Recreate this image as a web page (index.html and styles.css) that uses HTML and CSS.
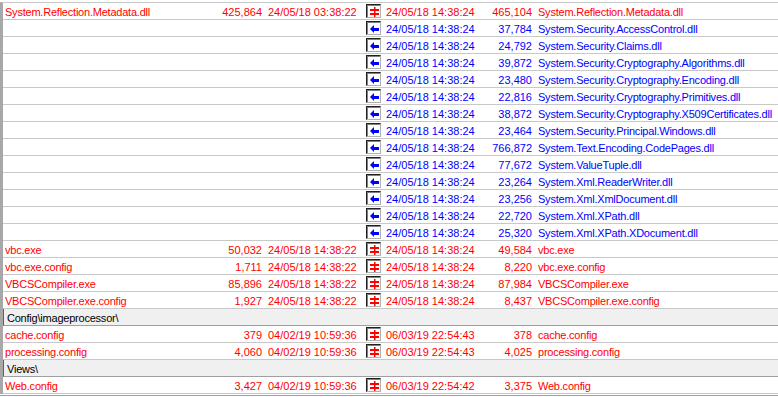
FILE: index.html
```html
<!DOCTYPE html>
<html>
<head>
<meta charset="utf-8">
<link rel="stylesheet" href="styles.css">
</head>
<body>
<svg width="0" height="0" class="defs">
  <defs>
    <g id="neq">
      <rect x="1" y="2" width="9" height="2" fill="#ff0000"/>
      <rect x="1" y="6" width="9" height="2" fill="#ff0000"/>
      <rect x="5" y="0" width="1.5" height="10" fill="#ff0000"/>
    </g>
    <g id="left">
      <polygon points="1,5 5,1 5,9" fill="#0000ff"/>
      <rect x="5" y="4" width="5" height="3" fill="#0000ff"/>
    </g>
  </defs>
</svg>
<div class="list">
  <div class="row red">
    <span class="name">System.Reflection.Metadata.dll</span><span class="size">425,864</span><span class="date">24/05/18 03:38:22</span>
    <span class="icon"><svg viewBox="0 0 11 10" width="11" height="10"><use href="#neq"/></svg></span>
    <span class="rdate">24/05/18 14:38:24</span><span class="size">465,104</span><span class="rname">System.Reflection.Metadata.dll</span>
  </div>
  <div class="row blue">
    <span class="name"></span><span class="size"></span><span class="date"></span>
    <span class="icon"><svg viewBox="0 0 11 10" width="11" height="10"><use href="#left"/></svg></span>
    <span class="rdate">24/05/18 14:38:24</span><span class="size">37,784</span><span class="rname">System.Security.AccessControl.dll</span>
  </div>
  <div class="row blue">
    <span class="name"></span><span class="size"></span><span class="date"></span>
    <span class="icon"><svg viewBox="0 0 11 10" width="11" height="10"><use href="#left"/></svg></span>
    <span class="rdate">24/05/18 14:38:24</span><span class="size">24,792</span><span class="rname">System.Security.Claims.dll</span>
  </div>
  <div class="row blue">
    <span class="name"></span><span class="size"></span><span class="date"></span>
    <span class="icon"><svg viewBox="0 0 11 10" width="11" height="10"><use href="#left"/></svg></span>
    <span class="rdate">24/05/18 14:38:24</span><span class="size">39,872</span><span class="rname">System.Security.Cryptography.Algorithms.dll</span>
  </div>
  <div class="row blue">
    <span class="name"></span><span class="size"></span><span class="date"></span>
    <span class="icon"><svg viewBox="0 0 11 10" width="11" height="10"><use href="#left"/></svg></span>
    <span class="rdate">24/05/18 14:38:24</span><span class="size">23,480</span><span class="rname">System.Security.Cryptography.Encoding.dll</span>
  </div>
  <div class="row blue">
    <span class="name"></span><span class="size"></span><span class="date"></span>
    <span class="icon"><svg viewBox="0 0 11 10" width="11" height="10"><use href="#left"/></svg></span>
    <span class="rdate">24/05/18 14:38:24</span><span class="size">22,816</span><span class="rname">System.Security.Cryptography.Primitives.dll</span>
  </div>
  <div class="row blue">
    <span class="name"></span><span class="size"></span><span class="date"></span>
    <span class="icon"><svg viewBox="0 0 11 10" width="11" height="10"><use href="#left"/></svg></span>
    <span class="rdate">24/05/18 14:38:24</span><span class="size">38,872</span><span class="rname">System.Security.Cryptography.X509Certificates.dll</span>
  </div>
  <div class="row blue">
    <span class="name"></span><span class="size"></span><span class="date"></span>
    <span class="icon"><svg viewBox="0 0 11 10" width="11" height="10"><use href="#left"/></svg></span>
    <span class="rdate">24/05/18 14:38:24</span><span class="size">23,464</span><span class="rname">System.Security.Principal.Windows.dll</span>
  </div>
  <div class="row blue">
    <span class="name"></span><span class="size"></span><span class="date"></span>
    <span class="icon"><svg viewBox="0 0 11 10" width="11" height="10"><use href="#left"/></svg></span>
    <span class="rdate">24/05/18 14:38:24</span><span class="size">766,872</span><span class="rname">System.Text.Encoding.CodePages.dll</span>
  </div>
  <div class="row blue">
    <span class="name"></span><span class="size"></span><span class="date"></span>
    <span class="icon"><svg viewBox="0 0 11 10" width="11" height="10"><use href="#left"/></svg></span>
    <span class="rdate">24/05/18 14:38:24</span><span class="size">77,672</span><span class="rname">System.ValueTuple.dll</span>
  </div>
  <div class="row blue">
    <span class="name"></span><span class="size"></span><span class="date"></span>
    <span class="icon"><svg viewBox="0 0 11 10" width="11" height="10"><use href="#left"/></svg></span>
    <span class="rdate">24/05/18 14:38:24</span><span class="size">23,264</span><span class="rname">System.Xml.ReaderWriter.dll</span>
  </div>
  <div class="row blue">
    <span class="name"></span><span class="size"></span><span class="date"></span>
    <span class="icon"><svg viewBox="0 0 11 10" width="11" height="10"><use href="#left"/></svg></span>
    <span class="rdate">24/05/18 14:38:24</span><span class="size">23,256</span><span class="rname">System.Xml.XmlDocument.dll</span>
  </div>
  <div class="row blue">
    <span class="name"></span><span class="size"></span><span class="date"></span>
    <span class="icon"><svg viewBox="0 0 11 10" width="11" height="10"><use href="#left"/></svg></span>
    <span class="rdate">24/05/18 14:38:24</span><span class="size">22,720</span><span class="rname">System.Xml.XPath.dll</span>
  </div>
  <div class="row blue">
    <span class="name"></span><span class="size"></span><span class="date"></span>
    <span class="icon"><svg viewBox="0 0 11 10" width="11" height="10"><use href="#left"/></svg></span>
    <span class="rdate">24/05/18 14:38:24</span><span class="size">25,320</span><span class="rname">System.Xml.XPath.XDocument.dll</span>
  </div>
  <div class="row red">
    <span class="name">vbc.exe</span><span class="size">50,032</span><span class="date">24/05/18 14:38:22</span>
    <span class="icon"><svg viewBox="0 0 11 10" width="11" height="10"><use href="#neq"/></svg></span>
    <span class="rdate">24/05/18 14:38:24</span><span class="size">49,584</span><span class="rname">vbc.exe</span>
  </div>
  <div class="row red">
    <span class="name">vbc.exe.config</span><span class="size">1,711</span><span class="date">24/05/18 14:38:22</span>
    <span class="icon"><svg viewBox="0 0 11 10" width="11" height="10"><use href="#neq"/></svg></span>
    <span class="rdate">24/05/18 14:38:24</span><span class="size">8,220</span><span class="rname">vbc.exe.config</span>
  </div>
  <div class="row red">
    <span class="name">VBCSCompiler.exe</span><span class="size">85,896</span><span class="date">24/05/18 14:38:22</span>
    <span class="icon"><svg viewBox="0 0 11 10" width="11" height="10"><use href="#neq"/></svg></span>
    <span class="rdate">24/05/18 14:38:24</span><span class="size">87,984</span><span class="rname">VBCSCompiler.exe</span>
  </div>
  <div class="row red">
    <span class="name">VBCSCompiler.exe.config</span><span class="size">1,927</span><span class="date">24/05/18 14:38:22</span>
    <span class="icon"><svg viewBox="0 0 11 10" width="11" height="10"><use href="#neq"/></svg></span>
    <span class="rdate">24/05/18 14:38:24</span><span class="size">8,437</span><span class="rname">VBCSCompiler.exe.config</span>
  </div>
  <div class="folder">Config\imageprocessor\</div>
  <div class="row red">
    <span class="name">cache.config</span><span class="size">379</span><span class="date">04/02/19 10:59:36</span>
    <span class="icon"><svg viewBox="0 0 11 10" width="11" height="10"><use href="#neq"/></svg></span>
    <span class="rdate">06/03/19 22:54:43</span><span class="size">378</span><span class="rname">cache.config</span>
  </div>
  <div class="row red">
    <span class="name">processing.config</span><span class="size">4,060</span><span class="date">04/02/19 10:59:36</span>
    <span class="icon"><svg viewBox="0 0 11 10" width="11" height="10"><use href="#neq"/></svg></span>
    <span class="rdate">06/03/19 22:54:43</span><span class="size">4,025</span><span class="rname">processing.config</span>
  </div>
  <div class="folder">Views\</div>
  <div class="row red">
    <span class="name">Web.config</span><span class="size">3,427</span><span class="date">04/02/19 10:59:36</span>
    <span class="icon"><svg viewBox="0 0 11 10" width="11" height="10"><use href="#neq"/></svg></span>
    <span class="rdate">06/03/19 22:54:42</span><span class="size">3,375</span><span class="rname">Web.config</span>
  </div>
</div>
<div class="bottom"></div>
</body>
</html>
```

FILE: styles.css
```css
html, body {
  margin: 0;
  padding: 0;
  background: #ffffff;
  overflow: hidden;
}
body {
  width: 778px;
  height: 397px;
  font-family: "Liberation Sans", Arial, sans-serif;
  font-size: 11px;
}
.defs {
  position: absolute;
  width: 0;
  height: 0;
}
.list {
  margin-top: 2px;
  border-top: 1px solid #c8c8c8;
  border-left: 3px solid #a8a8a8;
}
.row {
  display: grid;
  grid-template-columns: 200px 57px 104px 15px 97px 54px 1fr;
  padding-left: 2px;
  height: 16px;
  border-bottom: 1px solid #c8c8c8;
  white-space: nowrap;
}
.row > span {
  padding-top: 2px;
  line-height: 14px;
  height: 14px;
  overflow: hidden;
}
.red { color: #ff0000; }
.blue { color: #0000ff; }
.size { text-align: right; }
.date { padding-left: 6px; }
.rdate { padding-left: 5px; }
.name, .rname { letter-spacing: -0.22px; }
.rname { padding-left: 6px; }
.row > .icon {
  padding: 0;
  margin-top: 1px;
  width: 15px;
  height: 14px;
  box-sizing: border-box;
  border-style: solid;
  border-width: 1px;
  border-color: #202020 #b0b0b0 #b0b0b0 #202020;
  box-shadow: inset 1px 1px 0 #808080;
  background: #ffffff;
  display: flex;
  align-items: center;
  justify-content: center;
}
.icon svg {
  display: block;
  margin: 1px 0 0 1px;
}
.folder {
  background: #f0f0f0;
  border-left: 1px solid #606060;
  border-bottom: 1px solid #a0a0a0;
  padding-left: 3px;
  padding-top: 2px;
  box-sizing: border-box;
  height: 17px;
  line-height: 14px;
  color: #000000;
  letter-spacing: -0.22px;
}
.bottom {
  height: 1px;
  margin-top: 1px;
  background: #a0a0a0;
}
```
